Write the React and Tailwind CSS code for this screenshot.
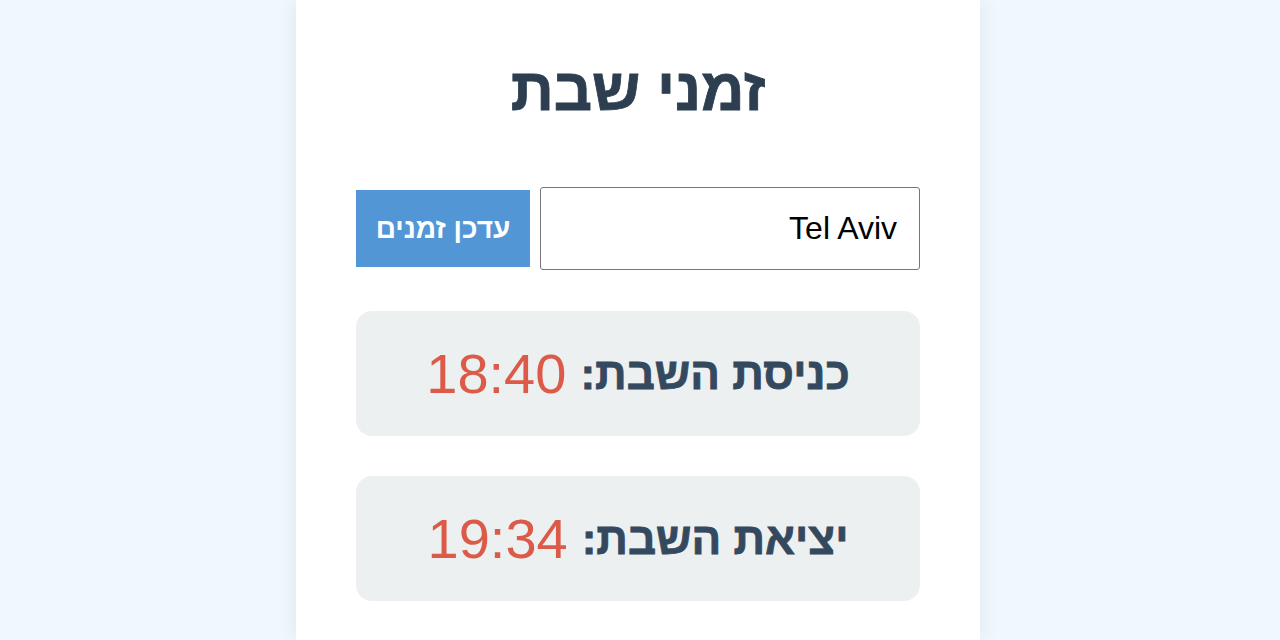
export default function App() {
  return (
    <div
      dir="rtl"
      className="h-[640px] overflow-hidden bg-[#f0f7ff] flex justify-center pr-[4px]"
      style={{ fontFamily: '"Liberation Sans", Arial, sans-serif' }}
    >
      <div className="w-[684px] bg-white px-[60px] pt-[50px] pb-20 shadow-[0_0_20px_rgba(0,0,0,0.08)]">
        <h1 className="text-center text-[60px] leading-[80px] font-bold text-[#2c3e50] [-webkit-text-stroke:0.8px_#2c3e50]">
          זמני שבת
        </h1>

        <div className="mt-[57px] flex items-center gap-[10px]">
          <input
            type="text"
            defaultValue="Tel Aviv"
            className="flex-1 min-w-0 h-[83px] px-[22px] text-[32px] text-black border border-[#767676] rounded-[3px] bg-white outline-none"
          />
          <button className="shrink-0 w-[174px] h-[77px] bg-[#5296d5] text-white text-[28px] font-bold">
            עדכן זמנים
          </button>
        </div>

        <div className="mt-[41px] h-[125px] rounded-[16px] bg-[#ecf0f1] flex items-center justify-center">
          <span className="text-[44px] font-bold text-[#34495e] [-webkit-text-stroke:0.8px_#34495e]">כניסת השבת:</span>
          <span className="mr-[14px] text-[56px] text-[#dc5a48]">18:40</span>
        </div>

        <div className="mt-[40px] h-[125px] rounded-[16px] bg-[#ecf0f1] flex items-center justify-center">
          <span className="text-[44px] font-bold text-[#34495e] [-webkit-text-stroke:0.8px_#34495e]">יציאת השבת:</span>
          <span className="mr-[14px] text-[56px] text-[#dc5a48]">19:34</span>
        </div>
      </div>
    </div>
  );
}
